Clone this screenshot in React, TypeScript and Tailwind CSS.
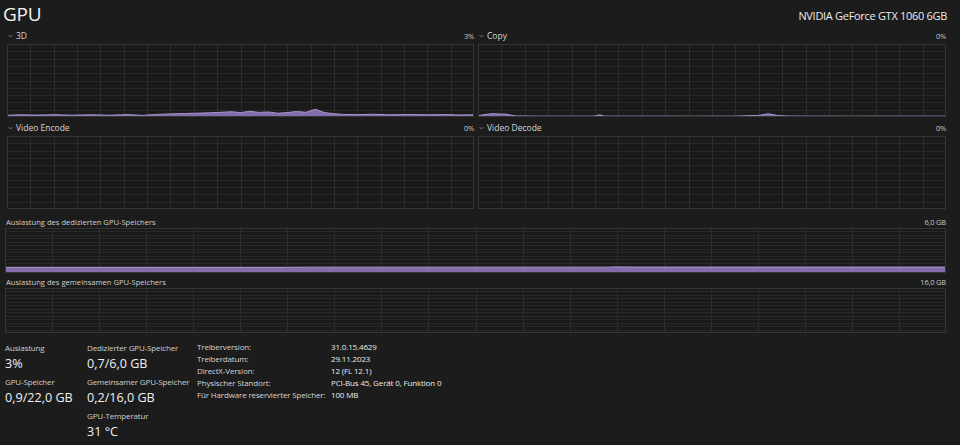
import React from 'react';

type Pt = [number, number];

const font = "font-['Open_Sans','Noto_Sans',sans-serif]";

const data3d: Pt[] = [
  [0, 2.5], [0.03, 3], [0.06, 2.6], [0.1, 3.2], [0.14, 2.5], [0.18, 3], [0.22, 2.4], [0.26, 3.3],
  [0.29, 2.2], [0.32, 3.5], [0.35, 4.2], [0.38, 4.8], [0.42, 5.5], [0.45, 6.2], [0.48, 7.2], [0.5, 6],
  [0.52, 7.8], [0.54, 6.3], [0.56, 6.8], [0.58, 5.2], [0.6, 6], [0.62, 7.5], [0.64, 6.5], [0.66, 10.5],
  [0.68, 6], [0.7, 4.5], [0.72, 3.5], [0.75, 3.2], [0.78, 3.8], [0.82, 3], [0.86, 3.4], [0.9, 3],
  [0.94, 3.3], [0.97, 2.8], [1, 3],
];

const dataCopy: Pt[] = [
  [0, 1.2], [0.01, 3], [0.03, 4.5], [0.06, 3.8], [0.08, 1.5], [0.12, 1.2], [0.2, 1.3], [0.25, 1.2],
  [0.26, 3], [0.27, 1.2], [0.4, 1.3], [0.45, 1.1], [0.55, 1.3], [0.6, 2.2], [0.62, 4.5], [0.64, 2],
  [0.66, 1.4], [0.7, 1.2], [0.8, 1.1], [0.9, 1.2], [1, 1.2],
];

const dataMem: Pt[] = [
  [0, 12.5], [0.3, 12.5], [0.32, 12.9], [0.64, 12.9], [0.65, 13.6], [0.67, 13.1], [1, 13.1],
];

const dataShared: Pt[] = [[0, 1.2], [1, 1.2]];

function Chart({
  w,
  h,
  cols,
  rows,
  data,
}: {
  w: number;
  h: number;
  cols: number;
  rows: number;
  data?: Pt[];
}) {
  const toY = (p: number) => h - (p / 100) * h;
  const line = data ? data.map(([x, p]) => `${(x * w).toFixed(1)},${toY(p).toFixed(1)}`).join(' ') : '';
  return (
    <svg width={w} height={h} className="block shrink-0">
      <rect x={0} y={0} width={w} height={h} fill="#1a1a1a" />
      {Array.from({ length: rows - 1 }, (_, j) => (
        <line
          key={'h' + j}
          x1={0}
          x2={w}
          y1={Math.round(((j + 1) * h) / rows) + 0.5}
          y2={Math.round(((j + 1) * h) / rows) + 0.5}
          stroke="#292929"
        />
      ))}
      {Array.from({ length: cols - 1 }, (_, i) => (
        <line
          key={'v' + i}
          y1={0}
          y2={h}
          x1={Math.round(((i + 1) * w) / cols) + 0.5}
          x2={Math.round(((i + 1) * w) / cols) + 0.5}
          stroke="#2c2c2c"
        />
      ))}
      {data && (
        <>
          <polygon points={`0,${h} ${line} ${w},${h}`} fill="#836daa" />
          <polyline points={line} fill="none" stroke="#a994cf" strokeWidth={1} />
        </>
      )}
      <rect x={0.5} y={0.5} width={w - 1} height={h - 1} fill="none" stroke="#353535" />
    </svg>
  );
}

function Chevron() {
  return (
    <svg width="5" height="4" viewBox="0 0 5 4" className="mr-[3px]">
      <path d="M0.5 1 L2.5 3 L4.5 1" fill="none" stroke="#8a8a8a" strokeWidth="0.8" />
    </svg>
  );
}

function EngineChart({ name, value, data, w }: { name: string; value: string; data?: Pt[]; w: number }) {
  return (
    <div className="flex flex-col" style={{ width: w }}>
      <div className="flex h-[10px] items-center justify-between mb-[3px]">
        <div className="flex items-center pl-[1px] text-[8.5px] leading-[10px] text-[#d6d6d6] whitespace-nowrap">
          <Chevron />
          <span>{name}</span>
        </div>
        <span className="text-[7.5px] leading-[10px] text-[#c8c8c8] tracking-[-0.3px]">{value}</span>
      </div>
      <Chart w={w} h={73} cols={20} rows={10} data={data} />
    </div>
  );
}

function MemChart({ name, value, data }: { name: string; value: string; data?: Pt[] }) {
  return (
    <div className="flex flex-col w-[941px]">
      <div className="flex h-[10px] items-center justify-between mb-[1px]">
        <span className="text-[7.6px] leading-[10px] text-[#d0d0d0] pl-[1px] whitespace-nowrap">{name}</span>
        <span className="text-[7.5px] leading-[10px] text-[#c8c8c8] tracking-[-0.2px]">{value}</span>
      </div>
      <Chart w={941} h={45} cols={20} rows={13} data={data} />
    </div>
  );
}

function Stat({ label, value }: { label: string; value: string }) {
  return (
    <div className="flex flex-col whitespace-nowrap">
      <span className="text-[8px] leading-[12px] tracking-[-0.15px] text-[#cfcfcf]">{label}</span>
      <span className="text-[12.6px] leading-[19px] text-[#f0f0f0] mb-[3px]">{value}</span>
    </div>
  );
}

const info: [string, string][] = [
  ['Treiberversion:', '31.0.15.4629'],
  ['Treiberdatum:', '29.11.2023'],
  ['DirectX-Version:', '12 (FL 12.1)'],
  ['Physischer Standort:', 'PCI-Bus 45, Gerät 0, Funktion 0'],
  ['Für Hardware reservierter Speicher:', '100 MB'],
];

export default function App() {
  return (
    <div className={`w-[960px] h-[445px] overflow-hidden bg-[#1c1c1c] text-white ${font}`}>
      <div className="flex items-start justify-between pl-[3px] pr-[13px] h-[31px]">
        <span className="text-[19px] leading-[28px] tracking-[-0.3px] text-[#f2f2f2]">GPU</span>
        <span className="text-[11px] leading-[16px] mt-[8px] tracking-[-0.3px] text-[#ececec]">
          NVIDIA GeForce GTX 1060 6GB
        </span>
      </div>

      <div className="flex flex-col pl-[7px]">
        <div className="flex gap-[4px]">
          <EngineChart name="3D" value="3%" data={data3d} w={467} />
          <EngineChart name="Copy" value="0%" data={dataCopy} w={468} />
        </div>
        <div className="flex gap-[4px] mt-[6px]">
          <EngineChart name="Video Encode" value="0%" w={467} />
          <EngineChart name="Video Decode" value="0%" w={468} />
        </div>
      </div>

      <div className="flex flex-col pl-[5px] mt-[8px]">
        <MemChart name="Auslastung des dedizierten GPU-Speichers" value="6,0 GB" data={dataMem} />
        <div className="mt-[4px]">
          <MemChart name="Auslastung des gemeinsamen GPU-Speichers" value="16,0 GB" data={dataShared} />
        </div>
      </div>

      <div className="flex pl-[5px] mt-[9px]">
        <div className="flex flex-col w-[82px]">
          <Stat label="Auslastung" value="3%" />
          <Stat label="GPU-Speicher" value="0,9/22,0 GB" />
        </div>
        <div className="flex flex-col w-[110px]">
          <Stat label="Dedizierter GPU-Speicher" value="0,7/6,0 GB" />
          <Stat label="Gemeinsamer GPU-Speicher" value="0,2/16,0 GB" />
          <Stat label="GPU-Temperatur" value="31 °C" />
        </div>
        <div className="grid grid-cols-[134px_auto] auto-rows-[12px] -mt-[1px] text-[8px] leading-[12px] tracking-[-0.15px] text-[#d4d4d4] whitespace-nowrap">
          {info.map(([k, v]) => (
            <React.Fragment key={k}>
              <span>{k}</span>
              <span className="text-[#ececec]">{v}</span>
            </React.Fragment>
          ))}
        </div>
      </div>
    </div>
  );
}
